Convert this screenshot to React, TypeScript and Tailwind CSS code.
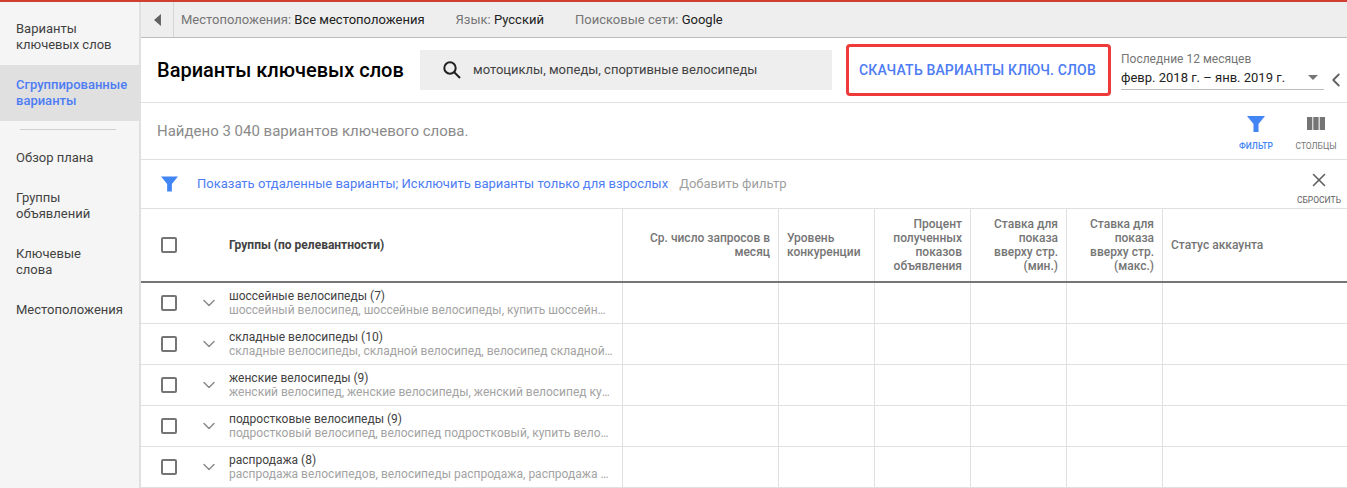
import { ChevronDown, ChevronLeft, X } from "lucide-react";

const NAV_TOP = ["Варианты ключевых слов"];
const NAV_BOTTOM = ["Обзор плана", "Группы объявлений", "Ключевые слова", "Местоположения"];

const ROWS = [
  ["шоссейные велосипеды (7)", "шоссейный велосипед, шоссейные велосипеды, купить шоссейный велосипед"],
  ["складные велосипеды (10)", "складные велосипеды, складной велосипед, велосипед складной купить"],
  ["женские велосипеды (9)", "женский велосипед, женские велосипеды, женский велосипед купить"],
  ["подростковые велосипеды (9)", "подростковый велосипед, велосипед подростковый, купить велосипед"],
  ["распродажа (8)", "распродажа велосипедов, велосипеды распродажа, распродажа велосипедов"],
];

const COLS = "grid grid-cols-[481px_156px_96px_96px_96px_96px_1fr]";

function Funnel({ className }: { className: string }) {
  return (
    <svg viewBox="0 0 18 18" className={className} aria-hidden>
      <path d="M0 1h18l-6.500 8v8H6.500v-8z" fill="currentColor" />
    </svg>
  );
}

function Checkbox() {
  return <div className="h-4 w-4 shrink-0 rounded-[2px] border-2 border-[#757575]" />;
}

function HeadCell({ children, left }: { children: React.ReactNode; left?: boolean }) {
  return (
    <div
      className={`flex items-center border-l border-[#e0e0e0] px-2 text-xs leading-[14px] font-medium text-[#757575] ${
        left ? "text-left" : "justify-end text-right"
      }`}
    >
      <span>{children}</span>
    </div>
  );
}

export default function App() {
  return (
    <div className="flex h-[488px] w-[1347px] flex-col overflow-hidden bg-white font-['Roboto',sans-serif] text-[13px] text-[#212121]">
      <div className="h-0.5 bg-[#d23f31]" />
      <div className="flex min-h-0 flex-1">
        <nav className="w-[141px] shrink-0 border-r-2 border-[#e0e0e0] bg-[#f5f5f5] text-[13px] leading-4 text-[#424242]">
          {NAV_TOP.map((n) => (
            <div key={n} className="h-[63px] pt-[19px] pr-6 pl-4">
              {n}
            </div>
          ))}
          <div className="flex h-14 items-center bg-[#e0e0e0] pr-2 pl-4 font-medium text-[#4d7cf4]">
            Сгруппированные варианты
          </div>
          <div className="mt-2 mb-5 ml-5 h-px w-24 bg-[#d0d0d0]" />
          <div className="flex flex-col gap-6 pr-6 pl-4">
            {NAV_BOTTOM.map((n) => (
              <div key={n}>{n}</div>
            ))}
          </div>
        </nav>

        <main className="min-w-0 flex-1">
          <div className="flex h-9 items-center border-b border-[#bdbdbd] bg-[#eeeeee]">
            <div className="flex h-full w-[33px] items-center justify-center border-r border-[#d6d6d6]">
              <svg viewBox="0 0 8 14" className="h-3 w-[7px] text-[#616161]" aria-hidden>
                <path d="M8 0v14L0 7z" fill="currentColor" />
              </svg>
            </div>
            <div className="flex gap-[31px] pl-[7px] text-[13px]">
              <span><span className="text-[#757575]">Местоположения:</span> Все местоположения</span>
              <span><span className="text-[#757575]">Язык:</span> Русский</span>
              <span><span className="text-[#757575]">Поисковые сети:</span> Google</span>
            </div>
          </div>

          <div className="flex h-[65px] items-center border-b border-[#e0e0e0] pl-4">
            <h1 className="w-[263px] shrink-0 text-xl leading-6 font-medium text-black">Варианты ключевых слов</h1>
            <div className="flex h-10 w-[412px] shrink-0 items-center bg-[#eeeeee] pl-[23px] text-[13px] text-[#424242]">
              <svg viewBox="0 0 18 18" className="mr-[12px] h-[18px] w-[18px] text-[#212121]" fill="none" aria-hidden>
                <circle cx="7" cy="7" r="5.700" stroke="currentColor" strokeWidth="2" />
                <path d="M11 11l6 6" stroke="currentColor" strokeWidth="2" />
              </svg>
              мотоциклы, мопеды, спортивные велосипеды
            </div>
            <div className="ml-[14px] flex h-[52px] w-[265px] shrink-0 items-center justify-center rounded-[4px] border-[3px] border-[#ef3a3a] pr-[2px] text-sm tracking-[0.15px] font-medium text-[#4d7cf4]">
              СКАЧАТЬ ВАРИАНТЫ КЛЮЧ. СЛОВ
            </div>
            <div className="ml-[10px] w-[226px] shrink-0">
              <div className="text-xs leading-4 text-[#757575]">Последние 12 месяцев</div>
              <div className="mt-1 flex items-center">
                <div className="flex h-[19px] w-[203px] shrink-0 items-center justify-between border-b border-[#bdbdbd] pb-1 text-[13px] leading-4">
                  февр. 2018 г. – янв. 2019 г.
                  <div className="mr-[6px] h-0 w-0 border-x-[5px] border-t-[5px] border-x-transparent border-t-[#757575]" />
                </div>
                <ChevronLeft className="-my-1 ml-px h-[22px] w-[22px] shrink-0 text-[#616161]" strokeWidth={2} />
              </div>
            </div>
          </div>

          <div className="flex h-[57px] items-start justify-between border-b border-[#e0e0e0] pr-px pl-4">
            <div className="mt-[20px] text-[15px] leading-4 text-[#8a8a8a]">Найдено 3 040 вариантов ключевого слова.</div>
            <div className="mt-[12px] flex">
              <div className="flex w-[60px] flex-col items-center text-[#4285f4]">
                <Funnel className="h-[18px] w-[18px]" />
                <span className="mt-[7px] text-[8.5px] leading-3 font-medium">ФИЛЬТР</span>
              </div>
              <div className="flex w-[60px] flex-col items-center text-[#757575]">
                <svg viewBox="0 0 18 16" className="h-[16px] w-[18px]" aria-hidden>
                  <path d="M0 2h5.300v13H0zM6.300 2h5.300v13H6.300zM12.700 2H18v13h-5.300z" fill="currentColor" />
                </svg>
                <span className="mt-[9px] text-[8.5px] leading-3">СТОЛБЦЫ</span>
              </div>
            </div>
          </div>

          <div className="flex h-[49px] items-start border-b border-[#e0e0e0] pl-5">
            <Funnel className="mt-[15px] h-[18px] w-[17px] text-[#4285f4]" />
            <div className="mt-[16px] ml-[19px] text-[13px] leading-4 text-[#4d7cf4]">
              Показать отдаленные варианты; Исключить варианты только для взрослых
            </div>
            <div className="mt-[16px] ml-[11px] text-[13px] leading-4 text-[#9e9e9e]">Добавить фильтр</div>
            <div className="mt-[9px] ml-auto flex w-[56px] flex-col items-center text-[#616161]">
              <X className="h-[22px] w-[22px]" strokeWidth={1.75} />
              <span className="mt-[3px] text-[8.5px] leading-3">СБРОСИТЬ</span>
            </div>
          </div>

          <div className={`${COLS} h-[74px] border-b-2 border-[#757575]`}>
            <div className="flex items-center pl-5">
              <Checkbox />
              <div className="ml-[52px] text-xs font-bold text-[#424242]">Группы (по релевантности)</div>
            </div>
            <HeadCell>Ср. число запросов в месяц</HeadCell>
            <HeadCell left>Уровень конкуренции</HeadCell>
            <HeadCell>Процент полученных показов объявления</HeadCell>
            <HeadCell>Ставка для показа вверху стр. (мин.)</HeadCell>
            <HeadCell>Ставка для показа вверху стр. (макс.)</HeadCell>
            <HeadCell left>Статус аккаунта</HeadCell>
          </div>

          {ROWS.map(([title, sub]) => (
            <div key={title} className={`${COLS} h-[41px] border-b border-[#e0e0e0]`}>
              <div className="flex items-center pl-5">
                <Checkbox />
                <ChevronDown className="ml-[22px] h-[20px] w-[20px] shrink-0 text-[#8a8a8a]" strokeWidth={1.75} />
                <div className="ml-[10px] w-[384px] min-w-0">
                  <div className="text-xs leading-[14px] text-[#424242]">{title}</div>
                  <div className="truncate text-xs leading-[14px] text-[#a3a3a3]">{sub}</div>
                </div>
              </div>
              {[0, 1, 2, 3, 4, 5].map((i) => (
                <div key={i} className="border-l border-[#e0e0e0]" />
              ))}
            </div>
          ))}
        </main>
      </div>
    </div>
  );
}
